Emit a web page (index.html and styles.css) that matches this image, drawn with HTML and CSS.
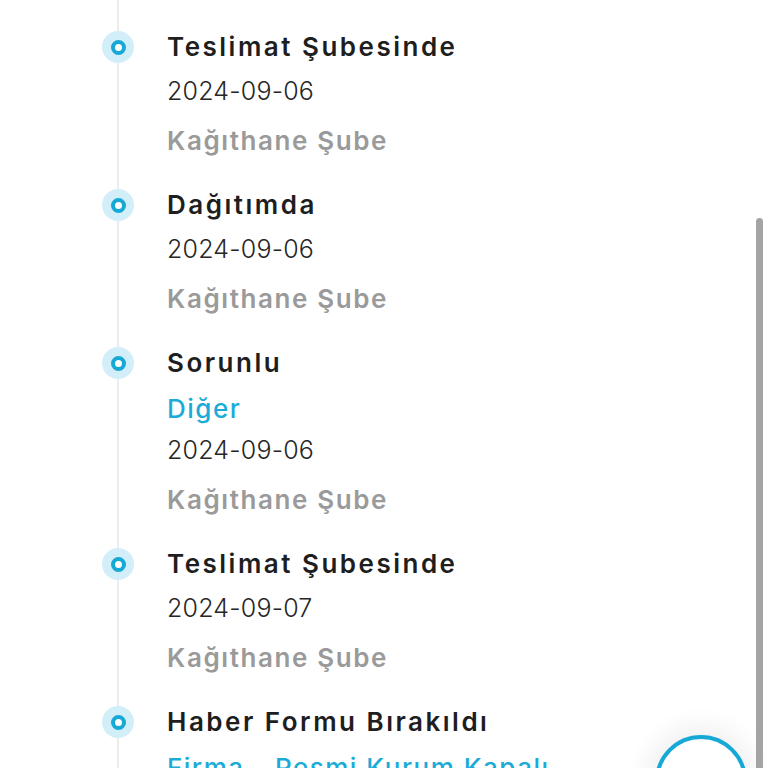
FILE: index.html
```html
<!DOCTYPE html>
<html lang="tr">
<head>
<meta charset="utf-8">
<title>Kargo Takip</title>
<link rel="stylesheet" href="styles.css">
</head>
<body>
<div class="page">
  <ul class="timeline">
    <li class="item">
      <span class="dot"></span>
      <div class="text">
        <div class="title">Teslimat Şubesinde</div>
        <div class="date">2024-09-06</div>
        <div class="branch">Kağıthane Şube</div>
      </div>
    </li>
    <li class="item">
      <span class="dot"></span>
      <div class="text">
        <div class="title">Dağıtımda</div>
        <div class="date">2024-09-06</div>
        <div class="branch">Kağıthane Şube</div>
      </div>
    </li>
    <li class="item">
      <span class="dot"></span>
      <div class="text">
        <div class="title">Sorunlu</div>
        <div class="sub">Diğer</div>
        <div class="date">2024-09-06</div>
        <div class="branch">Kağıthane Şube</div>
      </div>
    </li>
    <li class="item">
      <span class="dot"></span>
      <div class="text">
        <div class="title">Teslimat Şubesinde</div>
        <div class="date">2024-09-07</div>
        <div class="branch">Kağıthane Şube</div>
      </div>
    </li>
    <li class="item">
      <span class="dot"></span>
      <div class="text">
        <div class="title">Haber Formu Bırakıldı</div>
        <div class="sub">Firma - Resmi Kurum Kapalı</div>
      </div>
    </li>
  </ul>
</div>
<button class="fab" aria-label="Yardım"></button>
<div class="scrollbar"></div>
</body>
</html>
```

FILE: styles.css
```css
html, body {
  margin: 0;
  padding: 0;
  height: 768px;
  overflow: hidden;
  background: #ffffff;
}
body {
  font-family: Inter, "Noto Sans", sans-serif;
}
.page {
  padding-left: 117px;
}
.timeline {
  list-style: none;
  margin: 0;
  padding: 29px 0 0 0;
  border-left: 2px solid #ececec;
  min-height: 800px;
}
.item {
  display: flex;
  align-items: flex-start;
  margin-bottom: 28px;
}
.dot {
  flex: none;
  box-sizing: border-box;
  width: 32px;
  height: 32px;
  margin-left: -17px;
  margin-top: 2px;
  border-radius: 50%;
  background: #d2eef8;
  display: flex;
  align-items: center;
  justify-content: center;
}
.dot::after {
  content: "";
  box-sizing: border-box;
  width: 15px;
  height: 15px;
  border-radius: 50%;
  border: 4px solid #17a9d6;
  background: #ffffff;
}
.text {
  margin-left: 33px;
  display: flex;
  flex-direction: column;
  white-space: nowrap;
}
.title {
  font-size: 26px;
  line-height: 36px;
  font-weight: 600;
  letter-spacing: 2.5px;
  color: #1e1e1e;
  margin-bottom: 8px;
}
.sub {
  font-size: 26px;
  line-height: 36px;
  font-weight: 500;
  letter-spacing: 1.5px;
  color: #1aabd7;
  margin-top: 2px;
  margin-bottom: 5px;
}
.date {
  font-size: 25px;
  line-height: 36px;
  font-weight: 300;
  letter-spacing: 0.2px;
  color: #262626;
  margin-bottom: 14px;
}
.branch {
  font-size: 26px;
  line-height: 36px;
  font-weight: 600;
  letter-spacing: 1.6px;
  color: #9a9a9a;
}
.fab {
  position: fixed;
  left: 655px;
  top: 735px;
  width: 92px;
  height: 92px;
  box-sizing: border-box;
  border-radius: 50%;
  border: 4px solid #17a9d6;
  background: #ffffff;
  box-shadow: 0 0 24px 10px rgba(0, 0, 0, 0.06);
  padding: 0;
}
.scrollbar {
  position: fixed;
  left: 756px;
  top: 218px;
  width: 7px;
  height: 560px;
  border-radius: 4px;
  background: #a4a4a4;
}
```
